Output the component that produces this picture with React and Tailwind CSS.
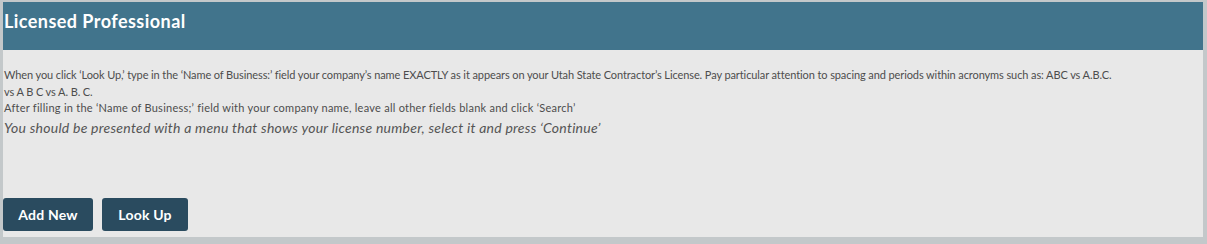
export default function App() {
  return (
    <div className="w-[1207px] h-[244px] bg-[#c3c8ca] pt-[2px] pl-[3px] pr-[4px] pb-[7px]" style={{ fontFamily: 'Lato, "Open Sans", sans-serif' }}>
      <div className="h-full bg-[#e8e8e8] flex flex-col">
        <div className="h-[48px] bg-[#41748c] px-[1px] pt-[8px]">
          <h2 className="text-white text-[18px] font-bold leading-[22px] tracking-[0.45px]">Licensed Professional</h2>
        </div>
        <div className="pl-[1px] pr-[80px] pt-[17px] text-[#4d4d4d] text-[11px] leading-[16.5px]">
          <p className="tracking-[-0.1px]">
            When you click ‘Look Up,’ type in the ‘Name of Business:’ field your company’s name EXACTLY as it appears on your Utah State Contractor’s License. Pay particular attention to spacing and periods within acronyms such as: ABC vs A.B.C. vs A B C vs A. B. C.
          </p>
          <p className="tracking-[0.25px]">After filling in the ‘Name of Business;’ field with your company name, leave all other fields blank and click ‘Search’</p>
          <p className="italic text-[14px] leading-[22px] tracking-[0.25px] text-[#555]">You should be presented with a menu that shows your license number, select it and press ‘Continue’</p>
        </div>
        <div className="mt-auto mb-[6px] flex gap-[9px]">
          <button className="h-[33px] w-[90px] rounded-[3px] bg-[#2a4b5f] text-white text-[14px] font-bold tracking-[0.2px]">Add New</button>
          <button className="h-[33px] w-[86px] rounded-[3px] bg-[#2a4b5f] text-white text-[14px] font-bold tracking-[0.2px]">Look Up</button>
        </div>
      </div>
    </div>
  );
}
